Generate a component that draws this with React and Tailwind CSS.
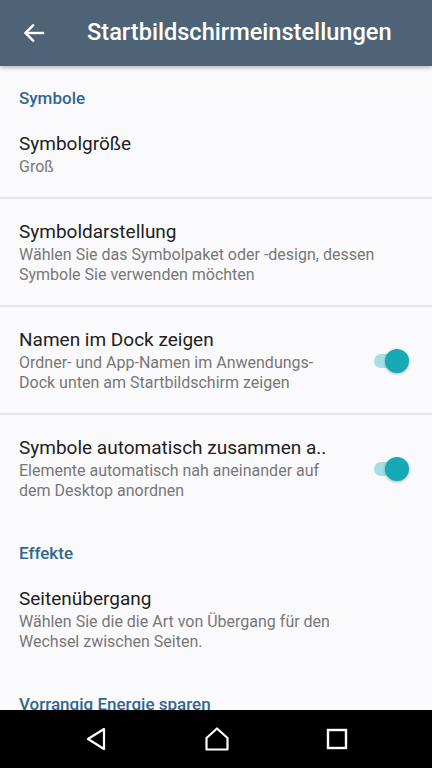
import { useState } from "react";

function SectionHeader({ children }) {
  return (
    <div className="h-[45px] pt-[21px] px-[19px] text-[17px] leading-[22px] font-medium text-[#30688f] whitespace-nowrap">
      {children}
    </div>
  );
}

function Toggle({ on, onChange }) {
  return (
    <button onClick={onChange} className="relative w-[42px] h-[28px] shrink-0 flex items-center">
      <span className={`absolute left-[6px] w-[32px] h-[14px] rounded-full ${on ? "bg-[#a5dfe4]" : "bg-[#bdbdbd]"}`} />
      <span
        className={`absolute w-[24px] h-[24px] rounded-full shadow-[0_1px_3px_rgba(0,0,0,0.3)] ${on ? "left-[17px] bg-[#16a9b6]" : "left-[0px] bg-[#f1f1f1]"}`}
      />
    </button>
  );
}

function Item({ title, lines, toggle, on, onToggle, divider }) {
  return (
    <>
      <div className="flex items-center px-[19px] pt-[21px] pb-[20px]">
        <div className="flex-1 min-w-0">
          <div className="text-[19px] leading-[24px] text-[#212121] whitespace-nowrap">{title}</div>
          <div className="mt-[1px] text-[16px] leading-[20px] text-[#777777]">
            {lines.map((l, i) => (
              <div key={i} className="whitespace-nowrap">{l}</div>
            ))}
          </div>
        </div>
        {toggle && (
          <div className="mr-[3px]">
            <Toggle on={on} onChange={onToggle} />
          </div>
        )}
      </div>
      {divider && <div className="h-[2px] bg-[#e6e6e8]" />}
    </>
  );
}

export default function App() {
  const [dock, setDock] = useState(true);
  const [auto, setAuto] = useState(true);

  return (
    <div
      className="w-[432px] h-[768px] flex flex-col bg-[#fafafc] overflow-hidden"
      style={{ fontFamily: "Roboto, 'Noto Sans', sans-serif" }}
    >
      {/* Toolbar */}
      <div className="relative z-10 h-[66px] shrink-0 bg-[#4f6377] flex items-center shadow-[0_2px_4px_rgba(0,0,0,0.25)]">
        <button className="w-[68px] h-full flex items-center pl-[23px]">
          <svg width="22" height="20" viewBox="0 0 22 20" fill="none" stroke="white" strokeWidth="2.4" strokeLinecap="square">
            <path d="M20 10H3" />
            <path d="M10 2.5L2.5 10L10 17.5" />
          </svg>
        </button>
        <div className="pl-[19px] text-[23.6px] font-medium text-white whitespace-nowrap">Startbildschirmeinstellungen</div>
      </div>

      {/* Content */}
      <div className="flex-1 overflow-hidden">
        <SectionHeader>Symbole</SectionHeader>
        <Item title="Symbolgröße" lines={["Groß"]} divider />
        <Item
          title="Symboldarstellung"
          lines={["Wählen Sie das Symbolpaket oder -design, dessen", "Symbole Sie verwenden möchten"]}
          divider
        />
        <Item
          title="Namen im Dock zeigen"
          lines={["Ordner- und App-Namen im Anwendungs-", "Dock unten am Startbildschirm zeigen"]}
          toggle
          on={dock}
          onToggle={() => setDock(!dock)}
          divider
        />
        <Item
          title="Symbole automatisch zusammen a.."
          lines={["Elemente automatisch nah aneinander auf", "dem Desktop anordnen"]}
          toggle
          on={auto}
          onToggle={() => setAuto(!auto)}
        />
        <SectionHeader>Effekte</SectionHeader>
        <Item
          title="Seitenübergang"
          lines={["Wählen Sie die die Art von Übergang für den", "Wechsel zwischen Seiten."]}
        />
        <SectionHeader>Vorrangig Energie sparen</SectionHeader>
      </div>

      {/* Nav bar */}
      <div className="h-[58px] shrink-0 bg-black flex items-center justify-around px-[36px]">
        <svg width="24" height="26" viewBox="0 0 24 26" fill="none" stroke="white" strokeWidth="2.2" strokeLinejoin="round">
          <path d="M20 3L4 13L20 23Z" />
        </svg>
        <svg width="26" height="26" viewBox="0 0 26 26" fill="none" stroke="white" strokeWidth="2.2" strokeLinejoin="round">
          <path d="M13 2.5L2.5 12V23.5H23.5V12Z" />
        </svg>
        <svg width="22" height="22" viewBox="0 0 22 22" fill="none" stroke="white" strokeWidth="2.4">
          <rect x="2" y="2" width="18" height="18" />
        </svg>
      </div>
    </div>
  );
}
